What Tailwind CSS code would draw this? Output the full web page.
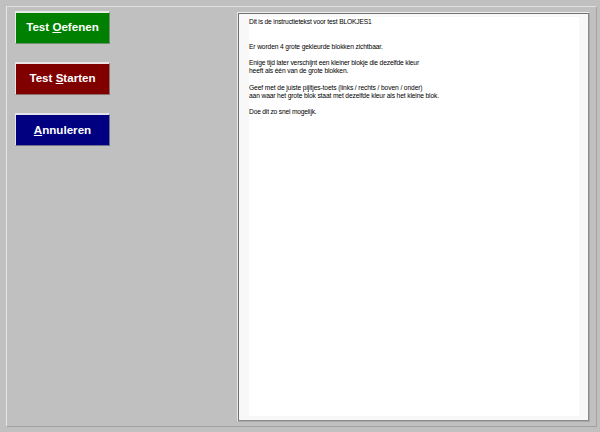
<!DOCTYPE html>
<html lang="nl">
<head>
<meta charset="utf-8">
<title>BLOKJES1</title>
<script src="https://cdn.jsdelivr.net/npm/@tailwindcss/browser@4"></script>
</head>
<body class="bg-[#c0c0c0] font-['Liberation_Sans',sans-serif] h-[432px] overflow-hidden">
<div class="w-[600px] h-[432px] overflow-hidden pl-[6px] pt-[6px] pr-[3px] pb-[5px]">
  <main class="flex justify-between w-full h-full border border-t-[#e0e0e0] border-l-[#e6e6e6] border-r-[#a4a4a4] border-b-[#a0a0a0] pl-[8px] pr-[6px] pt-[4px]">
    <nav class="flex flex-col gap-[18px] text-white font-bold text-[11.6px]">
      <button class="w-[95px] h-[33px] bg-[#008000] border border-t-2 border-t-[#e4ece4] border-l-[#e4ece4] border-r-[#6f8f6f] border-b-[#6f8f6f] leading-none pb-[3px]">Test <u class="underline-offset-1">O</u>efenen</button>
      <button class="w-[95px] h-[33px] bg-[#800000] border border-t-2 border-t-[#ece4e4] border-l-[#ece4e4] border-r-[#8f6f6f] border-b-[#8f6f6f] leading-none pb-[3px]">Test <u class="underline-offset-1">S</u>tarten</button>
      <button class="w-[95px] h-[33px] bg-[#000080] border border-t-2 border-t-[#e4e4ec] border-l-[#e4e4ec] border-r-[#6f6f8f] border-b-[#6f6f8f] leading-none pb-px"><u class="underline-offset-1">A</u>nnuleren</button>
    </nav>
    <section class="w-[353px] h-[410px] mt-px border border-t-[#f0f0f0] border-l-[#e8e8e8] border-r-[#a8a8a8] border-b-[#a8a8a8]">
      <div class="w-full h-full border border-t-[#707070] border-l-[#707070] border-r-[#8c8c8c] border-b-[#8c8c8c] bg-[#f8f8f8] pl-[10px] pr-[9px] pt-[3px] pb-[4px]">
        <div class="h-full bg-white text-black text-[6.7px] leading-[8.2px] whitespace-pre pt-px"><p class="tracking-[-0.17px]">Dit is de instructietekst voor test BLOKJES1</p><p class="mt-[16.4px] tracking-[-0.13px]">Er worden 4 grote gekleurde blokken zichtbaar.</p><p class="mt-[8.2px] tracking-[-0.165px]">Enige tijd later verschijnt een kleiner blokje die dezelfde kleur</p><p class="tracking-[-0.14px]">heeft als één van de grote blokken.</p><p class="mt-[8.2px] tracking-[-0.12px]">Geef met de juiste pijltjes-toets (links / rechts / boven / onder)</p><p class="tracking-[-0.14px]">aan waar het grote blok staat met dezelfde kleur als het kleine blok.</p><p class="mt-[8.2px] tracking-[-0.2px]">Doe dit zo snel mogelijk.</p></div>
      </div>
    </section>
  </main>
</div>
</body>
</html>
